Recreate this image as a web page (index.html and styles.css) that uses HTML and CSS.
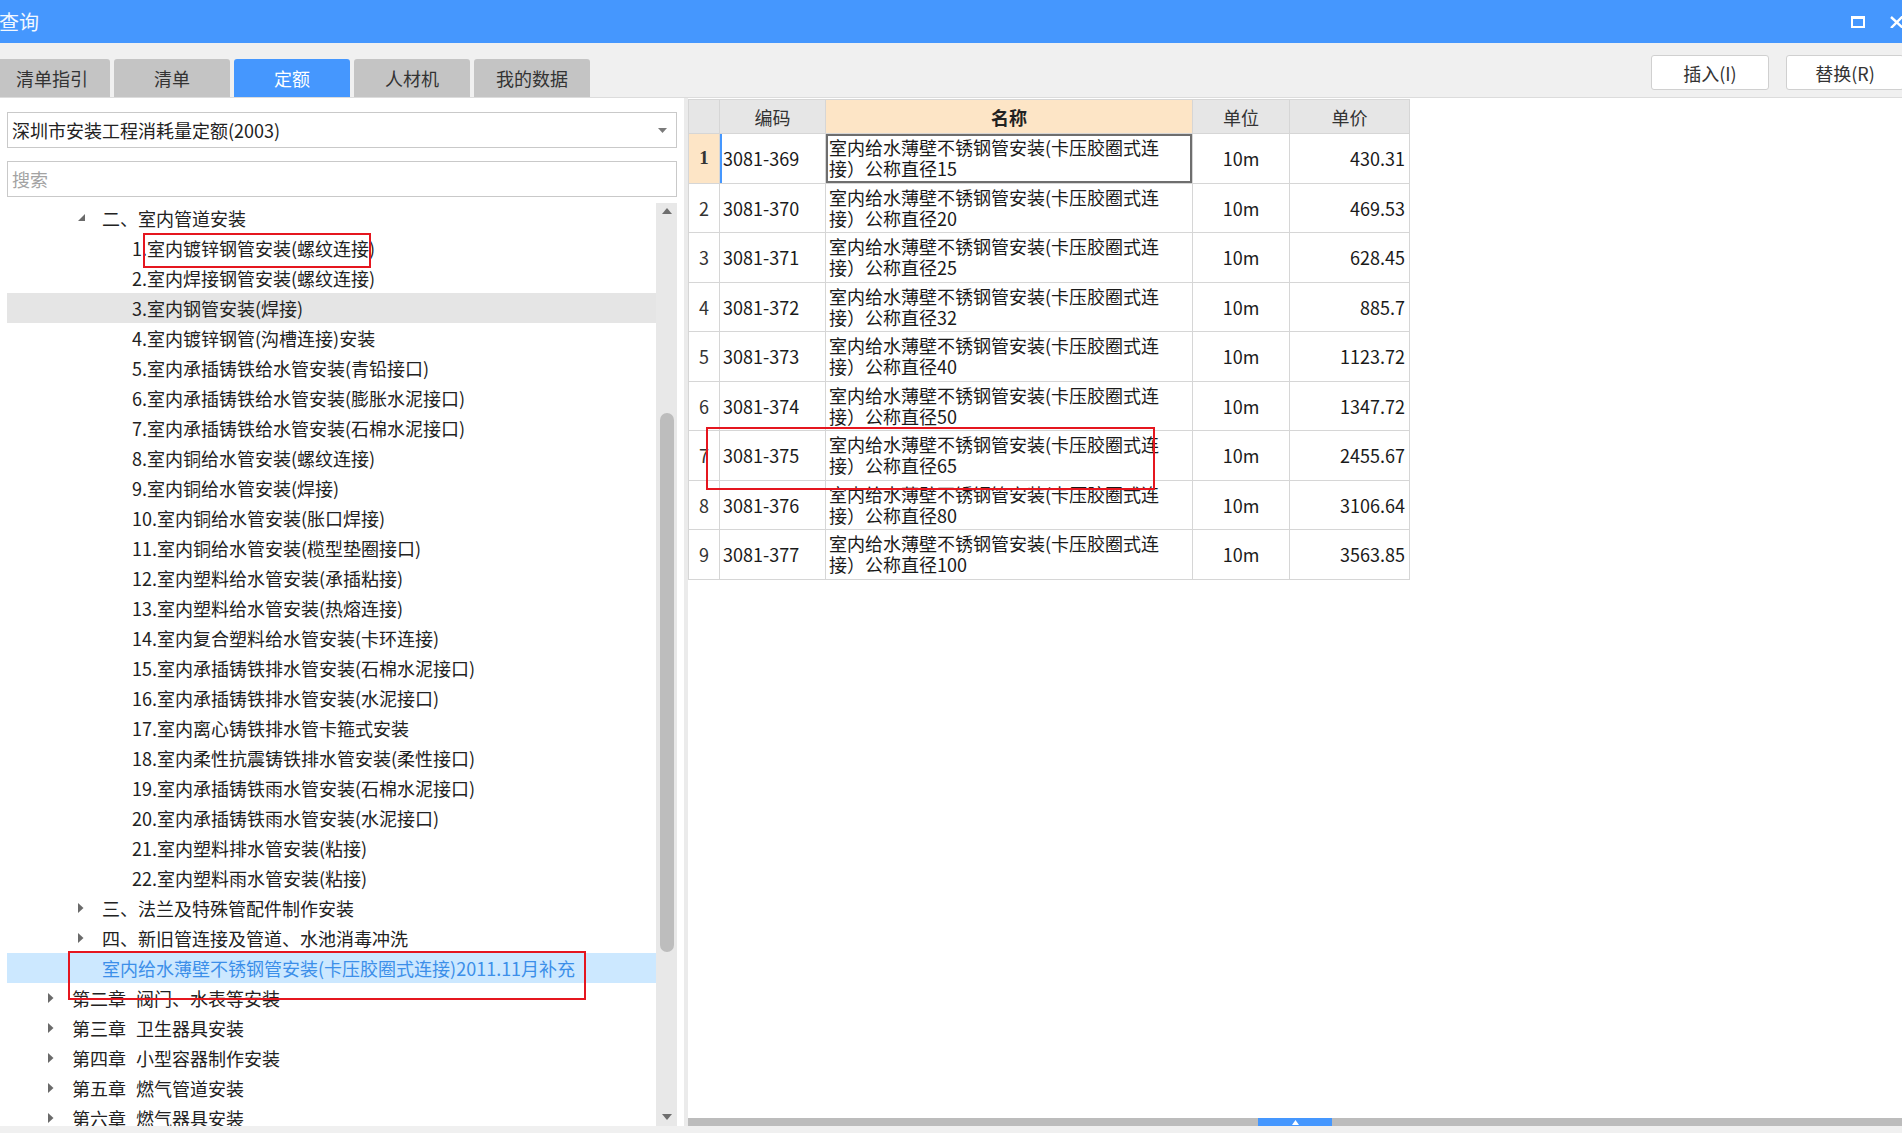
FILE: index.html
```html
<!DOCTYPE html>
<html lang="zh-CN">
<head>
<meta charset="utf-8">
<title>查询</title>
<link rel="stylesheet" href="styles.css">
</head>
<body>
<div class="window">
  <header class="titlebar">
    <span class="title">查询</span>
    <div class="winctl">
      <svg class="ic-max" width="14" height="12" viewBox="0 0 14 12"><rect x="1" y="1.5" width="12" height="9.5" fill="none" stroke="#fff" stroke-width="2"/><rect x="0" y="0" width="14" height="3" fill="#fff"/></svg>
      <svg class="ic-close" width="12" height="12" viewBox="0 0 12 12"><path d="M1 1 L14 13 M14 -1 L1 12" stroke="#fff" stroke-width="2.4"/></svg>
    </div>
  </header>

  <div class="toolbar">
    <nav class="tabs">
      <div class="tab">清单指引</div>
      <div class="tab">清单</div>
      <div class="tab active">定额</div>
      <div class="tab">人材机</div>
      <div class="tab">我的数据</div>
    </nav>
    <div class="actions">
      <button class="btn">插入(I)</button>
      <button class="btn">替换(R)</button>
    </div>
  </div>

  <main class="main">
    <section class="left">
      <div class="select">
        <span>深圳市安装工程消耗量定额(2003)</span>
        <svg width="9" height="5" viewBox="0 0 9 5"><polygon points="0,0 9,0 4.5,5" fill="#7a7a7a"/></svg>
      </div>
      <div class="search">搜索</div>
      <div class="treebox">
        <ul class="tree">
          <li class="node l2"><span class="tw"><svg width="8" height="8" viewBox="0 0 8 8"><polygon points="7,0 7,7 0,7" fill="#6a6a6a"/></svg></span>二、室内管道安装</li>
          <li class="node l3">1.室内镀锌钢管安装(螺纹连接)</li>
          <li class="node l3">2.室内焊接钢管安装(螺纹连接)</li>
          <li class="node l3 hover">3.室内钢管安装(焊接)</li>
          <li class="node l3">4.室内镀锌钢管(沟槽连接)安装</li>
          <li class="node l3">5.室内承插铸铁给水管安装(青铅接口)</li>
          <li class="node l3">6.室内承插铸铁给水管安装(膨胀水泥接口)</li>
          <li class="node l3">7.室内承插铸铁给水管安装(石棉水泥接口)</li>
          <li class="node l3">8.室内铜给水管安装(螺纹连接)</li>
          <li class="node l3">9.室内铜给水管安装(焊接)</li>
          <li class="node l3">10.室内铜给水管安装(胀口焊接)</li>
          <li class="node l3">11.室内铜给水管安装(榄型垫圈接口)</li>
          <li class="node l3">12.室内塑料给水管安装(承插粘接)</li>
          <li class="node l3">13.室内塑料给水管安装(热熔连接)</li>
          <li class="node l3">14.室内复合塑料给水管安装(卡环连接)</li>
          <li class="node l3">15.室内承插铸铁排水管安装(石棉水泥接口)</li>
          <li class="node l3">16.室内承插铸铁排水管安装(水泥接口)</li>
          <li class="node l3">17.室内离心铸铁排水管卡箍式安装</li>
          <li class="node l3">18.室内柔性抗震铸铁排水管安装(柔性接口)</li>
          <li class="node l3">19.室内承插铸铁雨水管安装(石棉水泥接口)</li>
          <li class="node l3">20.室内承插铸铁雨水管安装(水泥接口)</li>
          <li class="node l3">21.室内塑料排水管安装(粘接)</li>
          <li class="node l3">22.室内塑料雨水管安装(粘接)</li>
          <li class="node l2"><span class="tw"><svg width="6" height="10" viewBox="0 0 6 10"><polygon points="0,0 5.5,5 0,10" fill="#6a6a6a"/></svg></span>三、法兰及特殊管配件制作安装</li>
          <li class="node l2"><span class="tw"><svg width="6" height="10" viewBox="0 0 6 10"><polygon points="0,0 5.5,5 0,10" fill="#6a6a6a"/></svg></span>四、新旧管连接及管道、水池消毒冲洗</li>
          <li class="node l2 leaf selected">室内给水薄壁不锈钢管安装(卡压胶圈式连接)2011.11月补充</li>
          <li class="node l1"><span class="tw"><svg width="6" height="10" viewBox="0 0 6 10"><polygon points="0,0 5.5,5 0,10" fill="#6a6a6a"/></svg></span><span class="ch">第二章</span>阀门、水表等安装</li>
          <li class="node l1"><span class="tw"><svg width="6" height="10" viewBox="0 0 6 10"><polygon points="0,0 5.5,5 0,10" fill="#6a6a6a"/></svg></span><span class="ch">第三章</span>卫生器具安装</li>
          <li class="node l1"><span class="tw"><svg width="6" height="10" viewBox="0 0 6 10"><polygon points="0,0 5.5,5 0,10" fill="#6a6a6a"/></svg></span><span class="ch">第四章</span>小型容器制作安装</li>
          <li class="node l1"><span class="tw"><svg width="6" height="10" viewBox="0 0 6 10"><polygon points="0,0 5.5,5 0,10" fill="#6a6a6a"/></svg></span><span class="ch">第五章</span>燃气管道安装</li>
          <li class="node l1"><span class="tw"><svg width="6" height="10" viewBox="0 0 6 10"><polygon points="0,0 5.5,5 0,10" fill="#6a6a6a"/></svg></span><span class="ch">第六章</span>燃气器具安装</li>
        </ul>
        <div class="vscroll">
          <svg class="vs-up" width="10" height="6" viewBox="0 0 10 6"><polygon points="0,6 10,6 5,0" fill="#6e6e6e"/></svg>
          <div class="vs-thumb"></div>
          <svg class="vs-down" width="10" height="6" viewBox="0 0 10 6"><polygon points="0,0 10,0 5,6" fill="#6e6e6e"/></svg>
        </div>
      </div>
    </section>

    <div class="splitter"></div>

    <section class="right">
      <table class="grid">
        <colgroup>
          <col class="c-num"><col class="c-code"><col class="c-name"><col class="c-unit"><col class="c-price">
        </colgroup>
        <thead>
          <tr><th></th><th>编码</th><th class="hname">名称</th><th>单位</th><th>单价</th></tr>
        </thead>
        <tbody>
          <tr class="cur"><td class="num">1</td><td class="code">3081-369</td><td class="name focus">室内给水薄壁不锈钢管安装(卡压胶圈式连<br>接）公称直径15</td><td class="unit">10m</td><td class="price">430.31</td></tr>
          <tr><td class="num">2</td><td class="code">3081-370</td><td class="name">室内给水薄壁不锈钢管安装(卡压胶圈式连<br>接）公称直径20</td><td class="unit">10m</td><td class="price">469.53</td></tr>
          <tr><td class="num">3</td><td class="code">3081-371</td><td class="name">室内给水薄壁不锈钢管安装(卡压胶圈式连<br>接）公称直径25</td><td class="unit">10m</td><td class="price">628.45</td></tr>
          <tr><td class="num">4</td><td class="code">3081-372</td><td class="name">室内给水薄壁不锈钢管安装(卡压胶圈式连<br>接）公称直径32</td><td class="unit">10m</td><td class="price">885.7</td></tr>
          <tr><td class="num">5</td><td class="code">3081-373</td><td class="name">室内给水薄壁不锈钢管安装(卡压胶圈式连<br>接）公称直径40</td><td class="unit">10m</td><td class="price">1123.72</td></tr>
          <tr><td class="num">6</td><td class="code">3081-374</td><td class="name">室内给水薄壁不锈钢管安装(卡压胶圈式连<br>接）公称直径50</td><td class="unit">10m</td><td class="price">1347.72</td></tr>
          <tr><td class="num">7</td><td class="code">3081-375</td><td class="name">室内给水薄壁不锈钢管安装(卡压胶圈式连<br>接）公称直径65</td><td class="unit">10m</td><td class="price">2455.67</td></tr>
          <tr><td class="num">8</td><td class="code">3081-376</td><td class="name">室内给水薄壁不锈钢管安装(卡压胶圈式连<br>接）公称直径80</td><td class="unit">10m</td><td class="price">3106.64</td></tr>
          <tr><td class="num">9</td><td class="code">3081-377</td><td class="name">室内给水薄壁不锈钢管安装(卡压胶圈式连<br>接）公称直径100</td><td class="unit">10m</td><td class="price">3563.85</td></tr>
        </tbody>
      </table>
      <div class="fill"></div>
      <div class="hscroll">
        <div class="hthumb"><svg width="7" height="5" viewBox="0 0 7 5"><polygon points="0,5 7,5 3.5,0" fill="#fff"/></svg></div>
      </div>
    </section>
  </main>
  <div class="status"></div>
</div>

<div class="mark mark-tree1"></div>
<div class="mark mark-row7"></div>
<div class="mark mark-sel"></div>
</body>
</html>
```

FILE: styles.css
```css
* { box-sizing: border-box; margin: 0; padding: 0; }

html, body { width: 1902px; height: 1133px; overflow: hidden; }

body {
  position: relative;
  background: #f0f0f0;
  font-family: "Noto Sans CJK SC", "Noto Sans", sans-serif;
  font-size: 18px;
  color: #222;
}

.window { display: flex; flex-direction: column; height: 1133px; }

/* title bar */
.titlebar {
  flex: none;
  height: 43px;
  background: #4597fe;
  display: flex;
  align-items: center;
  justify-content: space-between;
}
.title { font-size: 20px; line-height: 43px; color: #f3f8ff; margin-left: -1px; }
.winctl { display: flex; align-items: center; gap: 25px; }
.ic-max { display: block; margin-top: 1px; }
.ic-close { display: block; margin-top: 1px; }

/* toolbar with tabs */
.toolbar {
  flex: none;
  height: 54px;
  display: flex;
  justify-content: space-between;
}
.tabs { display: flex; align-items: flex-end; gap: 4px; margin-left: -6px; }
.tab {
  width: 116px;
  height: 38px;
  background: #c4c4c4;
  color: #333;
  border-radius: 3px 3px 0 0;
  display: flex;
  align-items: center;
  justify-content: center;
  line-height: 1;
}
.tab.active { background: #4597fe; color: #fff; }

.actions { display: flex; gap: 17px; padding-top: 12px; margin-right: -2px; }
.btn {
  width: 118px;
  height: 35px;
  background: #fff;
  border: 1px solid #d0d0d0;
  border-radius: 3px;
  font: inherit;
  font-size: 18px;
  color: #333;
  line-height: 1;
}

/* main area */
.main {
  flex: 1;
  min-height: 0;
  display: flex;
  border-top: 1px solid #dcdcdc;
}

.left {
  width: 684px;
  flex: none;
  background: #fff;
  display: flex;
  flex-direction: column;
  padding: 14px 7px 0 7px;
}
.select {
  flex: none;
  height: 36px;
  border: 1px solid #c9c9c9;
  display: flex;
  align-items: center;
  justify-content: space-between;
  padding: 0 9px 0 4px;
  color: #222;
}
.search {
  flex: none;
  height: 36px;
  margin-top: 13px;
  border: 1px solid #c9c9c9;
  color: #a3a3a3;
  padding-left: 4px;
  display: flex;
  align-items: center;
}

.treebox { flex: 1; min-height: 0; margin-top: 6px; display: flex; }
.tree { flex: 1; list-style: none; overflow: hidden; }
.node {
  height: 30px;
  line-height: 30px;
  white-space: nowrap;
  display: flex;
  align-items: center;
  color: #222;
}
.node .tw { width: 24px; flex: none; display: flex; align-items: center; }
.node .tw svg { display: block; }
.l1 { padding-left: 41px; }
.l2 { padding-left: 71px; }
.l2.leaf { padding-left: 95px; }
.l3 { padding-left: 125px; }
.ch { margin-right: 10px; }
.node.hover { background: #e5e5e5; }
.node.selected { background: #cce8ff; color: #3c8fe9; }

.vscroll {
  width: 21px;
  flex: none;
  background: #e8e8e8;
  display: flex;
  flex-direction: column;
  align-items: center;
}
.vs-up { display: block; margin-top: 5px; flex: none; }
.vs-thumb { flex: none; width: 14px; height: 539px; margin-top: 199px; background: #bdbdbd; border-radius: 7px; }
.vs-down { display: block; margin-top: auto; margin-bottom: 6px; flex: none; }

.splitter { width: 4px; flex: none; background: #ebebeb; }

/* right grid */
.right {
  flex: 1;
  min-width: 0;
  background: #fff;
  display: flex;
  flex-direction: column;
  padding-top: 1px;
}
.grid {
  border-collapse: collapse;
  table-layout: fixed;
  width: 721px;
  font-size: 18px;
  color: #1a1a1a;
}
.c-num { width: 31px; }
.c-code { width: 106px; }
.c-name { width: 367px; }
.c-unit { width: 97px; }
.c-price { width: 120px; }

.grid th, .grid td { border: 1px solid #d6d6d6; }
.grid th {
  height: 34px;
  background: #e6e6e6;
  font-weight: normal;
  color: #333;
  line-height: 1;
}
.grid th.hname { background: #fde5c6; font-weight: bold; color: #222; }

.grid td { height: 49.5px; vertical-align: middle; white-space: nowrap; }
.grid td.num { text-align: center; color: #333; }
.grid td.code { padding-left: 3px; }
.grid td.name { padding-left: 3px; line-height: 21px; }
.grid td.unit { text-align: center; }
.grid td.price { text-align: right; padding-right: 4px; }

.grid tr.cur td.num {
  background: #fde5c6;
  font-family: "Liberation Serif", serif;
  font-weight: bold;
  font-size: 19px;
}
.grid tr.cur td.code { box-shadow: inset 2px 0 0 #4597fe; }
.grid td.name.focus { box-shadow: inset 0 0 0 2px #6e6e6e; }

.fill { flex: 1; }
.hscroll {
  flex: none;
  height: 8px;
  background: #bcbcbc;
  display: flex;
  justify-content: center;
}
.hthumb {
  width: 74px;
  height: 8px;
  background: #4597fe;
  display: flex;
  align-items: center;
  justify-content: center;
}
.hthumb svg { display: block; }

.status { flex: none; height: 7px; background: #f0f0f0; }

/* red annotation boxes drawn over the screenshot */
.mark { position: absolute; border: 2px solid #e5161f; }
.mark-tree1 { left: 143px; top: 233px; width: 228px; height: 35px; }
.mark-row7 { left: 706px; top: 427px; width: 449px; height: 63px; }
.mark-sel { left: 68px; top: 951px; width: 518px; height: 49px; }
```
